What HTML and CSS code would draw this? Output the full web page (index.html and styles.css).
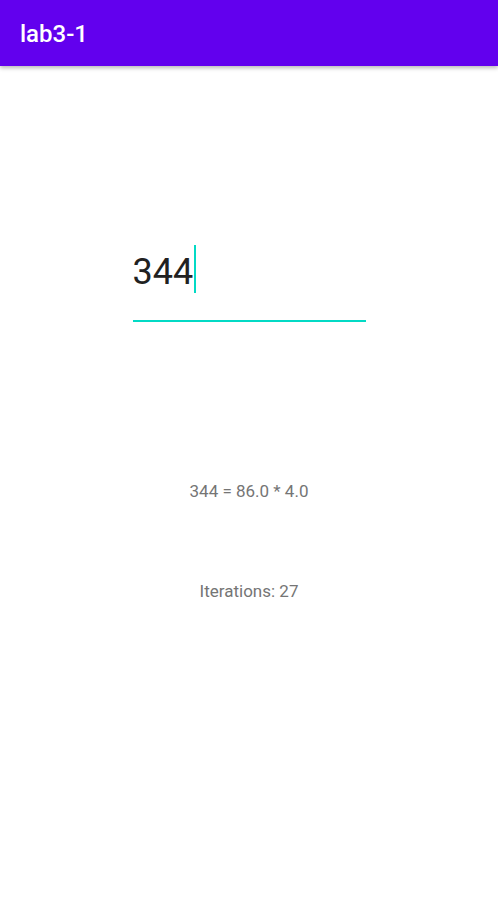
FILE: index.html
```html
<!DOCTYPE html>
<html>
<head>
<meta charset="utf-8">
<link rel="stylesheet" href="styles.css">
</head>
<body>
<header class="appbar"><span class="title">lab3-1</span></header>
<main class="content">
  <div class="field">
    <div class="input-row"><span class="value">344</span><span class="cursor"></span></div>
    <div class="underline"></div>
  </div>
  <p class="result">344 = 86.0 * 4.0</p>
  <p class="iterations">Iterations: 27</p>
</main>
</body>
</html>
```
FILE: styles.css
```css
html, body { margin: 0; padding: 0; background: #fff; }
body { font-family: Roboto, "Noto Sans", sans-serif; width: 498px; height: 912px; overflow: hidden; }
.appbar {
  height: 66px;
  background: #6200EE;
  display: flex;
  align-items: center;
  padding-left: 20px;
  box-shadow: 0 2px 4px rgba(0,0,0,0.28);
  position: relative;
}
.title { color: #fff; font-size: 24px; font-weight: 500; margin-top: 1px; }
.content { display: flex; flex-direction: column; align-items: center; }
.field { width: 233px; margin-top: 179px; }
.input-row { display: flex; align-items: flex-start; height: 48px; }
.value { font-size: 36px; color: #212121; line-height: 48px; margin-top: 3px; }
.cursor { width: 2px; height: 48px; background: #03DAC5; margin-left: 1px; }
.underline { height: 2px; background: #03DAC5; margin-top: 27px; }
.result { margin: 159px 0 0; font-size: 17px; color: #757575; line-height: 20px; }
.iterations { margin: 80px 0 0; font-size: 17px; color: #757575; line-height: 20px; }
```
